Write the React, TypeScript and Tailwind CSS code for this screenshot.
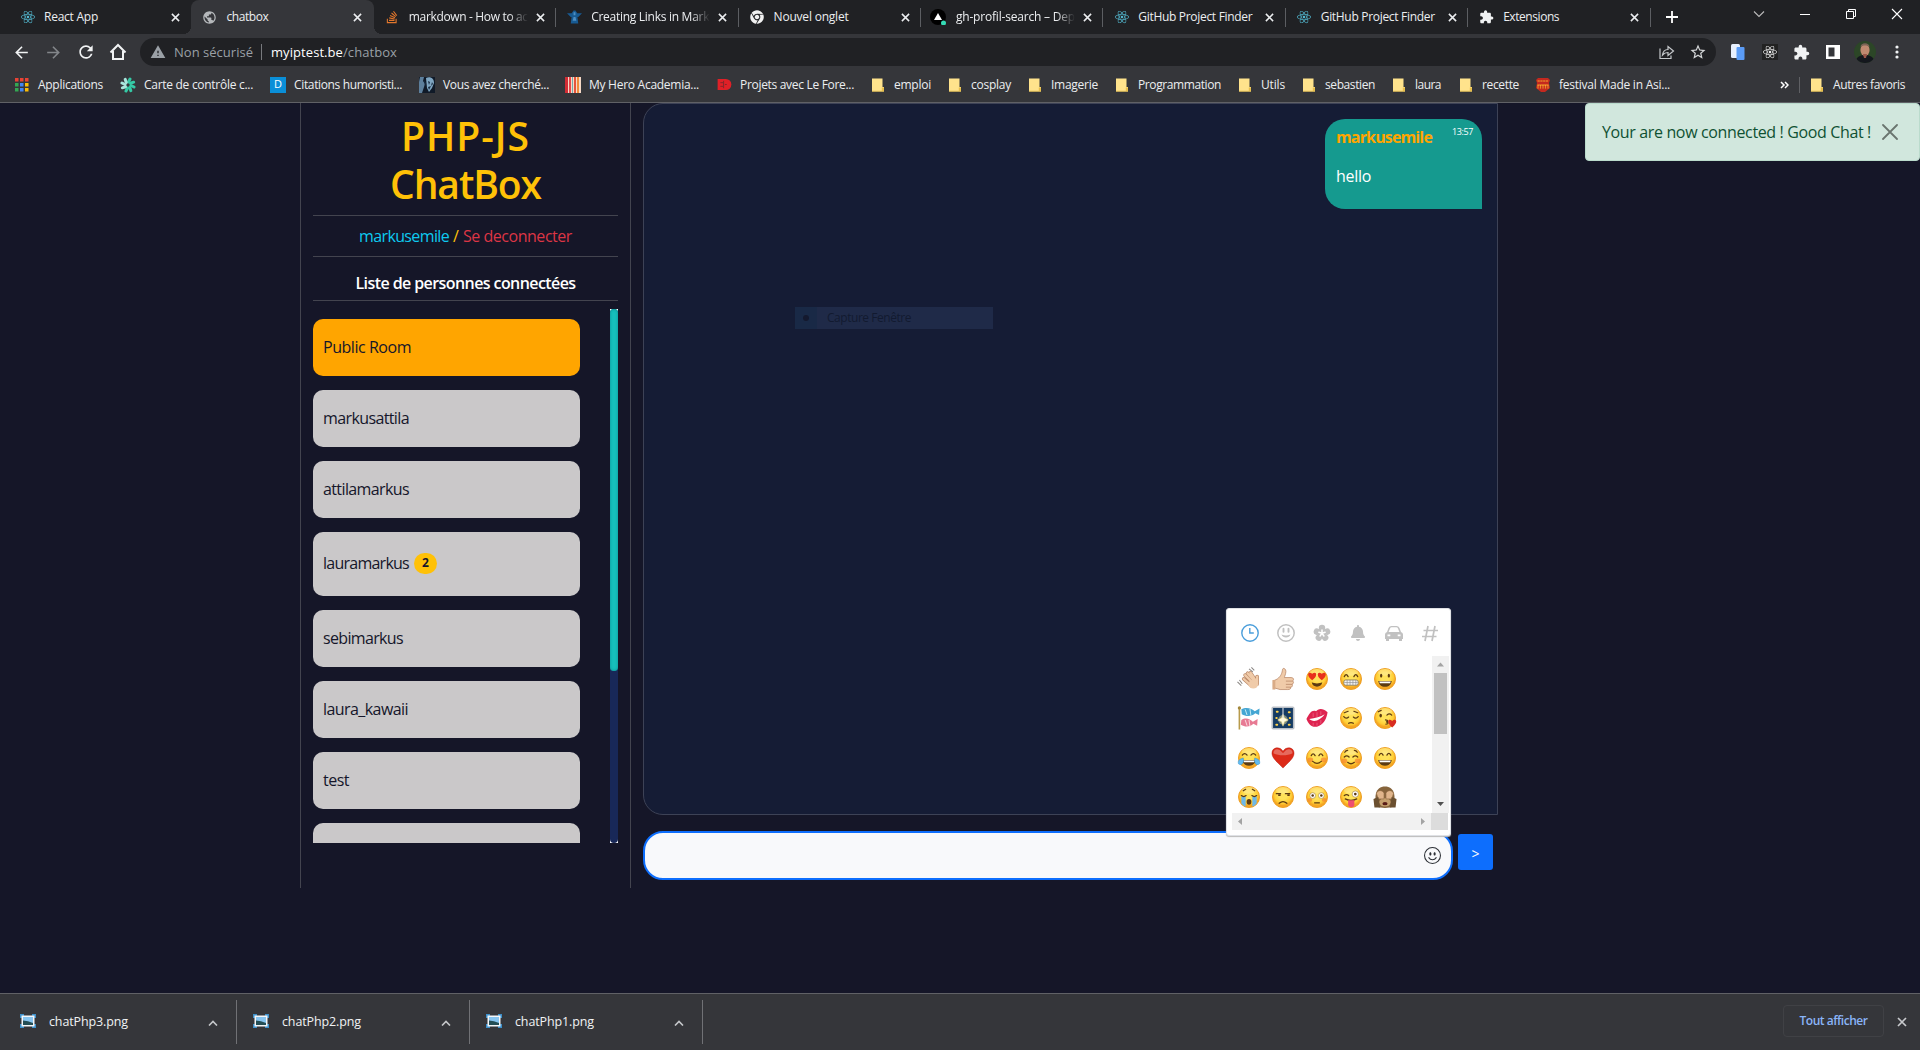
import React, { useLayoutEffect, useRef, useState } from "react";
import { MdArrowBack, MdArrowForward, MdRefresh, MdExtension, MdWarning, MdStarBorder, MdPublic } from "react-icons/md";
import { FaReact, FaBell, FaStackOverflow, FaChrome } from "react-icons/fa";
import { BsEmojiSmile } from "react-icons/bs";

/* Text whose letter spacing is adjusted so that it spans the given width. */
function Fit({ w, children, className = "" }: { w: number; children: string; className?: string }) {
  const ref = useRef<HTMLSpanElement>(null);
  const [ls, setLs] = useState(0);
  useLayoutEffect(() => {
    if (ref.current) setLs((w - ref.current.getBoundingClientRect().width) / children.length);
  }, [w, children]);
  return (
    <span ref={ref} className={"inline-block whitespace-pre shrink-0 " + className} style={{ letterSpacing: ls + "px" }}>
      {children}
    </span>
  );
}

const Close = ({ className = "" }: { className?: string }) => (
  <svg viewBox="0 0 10 10" className={"shrink-0 " + className} fill="none" stroke="currentColor" strokeWidth="1.7">
    <path d="M1 1l8 8M9 1l-8 8" />
  </svg>
);

const Triangle = () => (
  <div className="relative -ml-0.5 flex h-4 w-4 items-center justify-center rounded-full bg-black">
    <svg viewBox="0 0 16 16" className="h-4 w-4">
      <path d="M8 4l4 7H4z" fill="#fff" />
      <circle cx="13.5" cy="14" r="2.5" fill="#35dbb5" />
    </svg>
  </div>
);

const Robot = () => (
  <svg viewBox="0 0 16 16" className="h-4 w-4" fill="#175a92">
    <path d="M0 4h5l2-3h2l2 3h5l-4 4H4z" />
    <path d="M5 7h6l1 8H4z" />
    <path d="M7 3h2v3H7zM7 8h2l1 4H6z" fill="#4d8fc4" />
  </svg>
);

const tabs: { t: string; w: number; icon: React.ReactNode; active?: boolean; fade?: boolean; sep?: boolean }[] = [
  { t: "React App", w: 54, icon: <FaReact className="text-[#53b9d1]" size={14} /> },
  { t: "chatbox", w: 42, icon: <MdPublic className="text-[#b5b8bb]" size={17} />, active: true },
  { t: "markdown - How to ac", w: 119, icon: <FaStackOverflow className="text-[#e0762c]" size={14} />, fade: true, sep: true },
  { t: "Creating Links in Mark", w: 118, icon: <Robot />, fade: true, sep: true },
  { t: "Nouvel onglet", w: 75, icon: <FaChrome className="text-[#f1f1f1]" size={14} />, sep: true },
  { t: "gh-profil-search – Dep", w: 119, icon: <Triangle />, fade: true, sep: true },
  { t: "GitHub Project Finder", w: 114, icon: <FaReact className="text-[#53b9d1]" size={14} />, sep: true },
  { t: "GitHub Project Finder", w: 114, icon: <FaReact className="text-[#53b9d1]" size={14} />, sep: true },
  { t: "Extensions", w: 56, icon: <MdExtension className="text-[#f1f3f4]" size={16} />, sep: true },
];

function TabStrip() {
  return (
    <div className="flex h-[34px] bg-[#202124] pl-[9px] text-[12px] text-[#eceef0]">
      {tabs.map((t, i) => (
        <div key={i} className={"relative flex h-[34px] w-[182.4px] shrink-0 items-center pl-[11px] " + (t.active ? "rounded-t-lg bg-[#35363a]" : "")}>
          {t.active && (
            <>
              <div className="absolute bottom-0 -left-2 h-2 w-2 bg-[radial-gradient(circle_at_0_0,#202124_8px,#35363a_8px)]" />
              <div className="absolute bottom-0 -right-2 h-2 w-2 bg-[radial-gradient(circle_at_100%_0,#202124_8px,#35363a_8px)]" />
            </>
          )}
          <div className="flex w-[15px] shrink-0 justify-center">{t.icon}</div>
          <div className={"ml-[9px] flex w-[119px] leading-5 " + (t.fade ? "[mask-image:linear-gradient(to_right,#000_84%,transparent)]" : "")}>
            <Fit w={t.w}>{t.t}</Fit>
          </div>
          <Close className="ml-[8px] h-[9px] w-[9px]" />
          {t.sep && <div className="absolute top-[8px] right-0 h-[19px] w-px bg-[#5c5e62]" />}
        </div>
      ))}
      <div className="flex w-[43px] items-center justify-center">
        <svg viewBox="0 0 12 12" className="h-3 w-3" stroke="#fff" strokeWidth="1.8"><path d="M6 0v12M0 6h12" /></svg>
      </div>
      <div className="ml-auto flex h-7 items-center text-white">
        <svg viewBox="0 0 46 28" className="h-7 w-[46px]" fill="none" stroke="#bbb" strokeWidth="1.1"><path d="M18 11.5l5 5 5-5" /></svg>
        <svg viewBox="0 0 46 28" className="h-7 w-[46px]" fill="none" stroke="#fff"><path d="M18 14.5h10" /></svg>
        <svg viewBox="0 0 46 28" className="h-7 w-[46px]" fill="none" stroke="#fff"><path d="M18.500 11.500h7v7h-7zM20.500 11v-1.500h7v7h-1.500" /></svg>
        <svg viewBox="0 0 46 28" className="h-7 w-[46px]" fill="none" stroke="#fff" strokeWidth="1.1"><path d="M18 9l10 10M28 9l-10 10" /></svg>
      </div>
    </div>
  );
}

function Toolbar() {
  return (
    <div className="flex h-[36px] items-center bg-[#35363a] pl-[12px]">
      <MdArrowBack size={19} className="text-[#f1f3f4]" />
      <MdArrowForward size={19} className="ml-[13px] text-[#83868a]" />
      <MdRefresh size={20} className="ml-[13px] text-[#f1f3f4]" />
      <svg viewBox="0 0 18 18" className="ml-[13px] h-[18px] w-[18px]" fill="none" stroke="#f1f3f4" strokeWidth="2">
        <path d="M1.500 9.500L9 2l7.500 7.500M4 8v8h10V8" />
      </svg>
      <div className="ml-[13px] flex h-[28px] w-[1576px] items-center rounded-full bg-[#202124] pl-[10px] text-[13px] text-[#9aa0a6]">
        <MdWarning size={16} />
        <Fit w={79} className="mt-px ml-[8px]">Non sécurisé</Fit>
        <div className="mr-[9px] ml-[8px] h-4 w-px bg-[#77797d]" />
        <Fit w={72} className="mt-px text-white">myiptest.be</Fit>
        <Fit w={54} className="mt-px">/chatbox</Fit>
        <svg viewBox="0 0 18 18" className="ml-auto h-[18px] w-[18px]" fill="none" stroke="#c5c8cb" strokeWidth="1.200">
          <path d="M3 5.500v10h11v-3M5.500 12c.5-4 2.500-5.500 5.500-5.500V3.500l5.500 4.500-5.500 4.500v-3c-2.500 0-4 .7-5.500 2.500z" />
        </svg>
        <MdStarBorder size={18} className="mr-[9px] ml-[14px] text-[#d5d7d9]" />
      </div>
      <svg viewBox="0 0 14 18" className="ml-[15px] h-[18px] w-[14px]">
        <rect x="0" y="1" width="9" height="14" rx="1.500" fill="#e8f0fe" />
        <rect x="5.500" y="4" width="8" height="13" rx="1" fill="#5b9cf6" />
      </svg>
      <div className="ml-[17px] flex h-4 w-4 items-center justify-center bg-[#222]"><FaReact size={14} className="text-[#eee]" /></div>
      <MdExtension size={17} className="ml-[15px] text-[#f1f3f4]" />
      <svg viewBox="0 0 14 14" className="ml-[16px] h-[14px] w-[14px]"><path d="M0 0h14v14H0zM2.500 2.500v9h6v-9z" fillRule="evenodd" fill="#fff" /></svg>
      <svg viewBox="0 0 22 22" className="ml-[14px] h-[22px] w-[22px]">
        <clipPath id="avatar"><circle cx="11" cy="11" r="11" /></clipPath>
        <g clipPath="url(#avatar)">
          <rect width="22" height="22" fill="#2c4627" />
          <path d="M1 22c1-6 5-8 10-8s9 2 10 8z" fill="#14171d" />
          <ellipse cx="11" cy="9" rx="4.600" ry="6" fill="#c08a70" />
          <path d="M6.500 6c0-5 9-5 9 0-2-2-7-2-9 0z" fill="#7c6556" />
          <path d="M9 13h4l-1 4h-2z" fill="#9a5648" />
        </g>
      </svg>
      <svg viewBox="0 0 4 16" className="ml-[19px] h-4 w-1" fill="#f1f3f4"><circle cx="2" cy="3" r="1.600" /><circle cx="2" cy="8" r="1.600" /><circle cx="2" cy="13" r="1.600" /></svg>
    </div>
  );
}

const Folder = () => (
  <svg viewBox="0 0 12 14" className="h-[14px] w-[12px] shrink-0">
    <path d="M0 .5h10.500V9H12v4.500H0z" fill="#ffe38c" />
    <path d="M0 12.800h9.800V9.500H12v4H0z" fill="#e8bf4b" />
  </svg>
);

const AppsIcon = () => (
  <svg viewBox="0 0 14 14" className="h-[14px] w-[14px]">
    {["#e94335", "#e94335", "#e94335", "#34a853", "#4285f4", "#fbbc05", "#34a853", "#4285f4", "#fbbc05"].map((c, i) => (
      <rect key={i} x={(i % 3) * 5} y={Math.floor(i / 3) * 5} width="3.500" height="3.500" fill={c} />
    ))}
  </svg>
);

const Burst = () => (
  <svg viewBox="0 0 16 16" className="h-4 w-4" strokeWidth="3" strokeLinecap="round">
    {[0, 45, 90, 135, 180, 225, 270, 315].map((a, i) => (
      <path key={a} d="M8.500 5L10 2" stroke={i < 5 ? "#35c9a5" : "#a9e6dc"} transform={`rotate(${a} 8 8)`} />
    ))}
  </svg>
);

const Anime = () => (
  <svg viewBox="0 0 16 16" className="h-4 w-4">
    <rect width="16" height="16" fill="#101a28" />
    <path d="M1 0h4L4 4l2 3-3 9H0V5z" fill="#5d7f9c" />
    <path d="M7 1c4-2 8 0 8 5l-2 5-3 4-2-4z" fill="#7fa6c2" />
    <path d="M5 3l2 3-1 4zM9 4l2 1-1 3zM13 5l1 2-2 2zM9 10l3-1-2 4z" fill="#182c42" />
  </svg>
);

const Stripes = () => (
  <svg viewBox="0 0 16 16" className="h-4 w-4">
    <rect width="16" height="16" fill="#f6d9c6" />
    <path d="M0 0h3v16H0z" fill="#d22d35" /><path d="M4 0h2v16H4z" fill="#e7474b" /><path d="M7 0h1v16H7z" fill="#7aa" />
    <path d="M9 0h2v16H9z" fill="#e5533d" /><path d="M12 0h2v16h-2z" fill="#f08b3b" />
  </svg>
);

const RedD = () => (
  <svg viewBox="0 0 15 12" className="h-[11px] w-[15px]">
    <path d="M0 0h9a6 6 0 010 12H0z" fill="#e02027" />
    <path d="M3 4h3M3 8h3M6.500 2v8M8 6h2" stroke="#7c262c" strokeWidth="1" />
  </svg>
);

const Festival = () => (
  <svg viewBox="0 0 14 14" className="h-[14px] w-[14px]">
    <path d="M2 0h10l2 2-1 3 1 5-5 4H5L0 10l1-5-1-3z" fill="#c4291f" />
    <path d="M1.500 3h11M2 6.500v4M4.500 6.500v4M7 6.500v4M9.500 6.500v4M12 6.500v4M1.500 7h11" stroke="#f7a52c" strokeWidth="1.200" strokeDasharray="2.300 .5" />
  </svg>
);

const bookmarks: [string, number, number, number, React.ReactNode][] = [
  ["Applications", 15, 23, 65, <AppsIcon />],
  ["Carte de contrôle c...", 120, 24, 109, <Burst />],
  ["Citations humoristi...", 270, 24, 108, <div className="flex h-4 w-4 items-center justify-center bg-[#0a8fd8] text-[11px] text-white">D</div>],
  ["Vous avez cherché...", 419, 24, 106, <Anime />],
  ["My Hero Academia...", 565, 24, 110, <Stripes />],
  ["Projets avec Le Fore...", 717, 23, 114, <RedD />],
  ["emploi", 872, 22, 37, <Folder />],
  ["cosplay", 949, 22, 40, <Folder />],
  ["Imagerie", 1029, 22, 47, <Folder />],
  ["Programmation", 1116, 22, 83, <Folder />],
  ["Utils", 1239, 22, 24, <Folder />],
  ["sebastien", 1303, 22, 50, <Folder />],
  ["laura", 1393, 22, 26, <Folder />],
  ["recette", 1460, 22, 37, <Folder />],
  ["festival Made in Asi...", 1536, 23, 111, <Festival />],
];

function Bookmarks() {
  return (
    <div className="flex h-[33px] items-center border-b border-[#606166] bg-[#35363a] pb-[3px] pl-[15px] text-[12px] text-[#eceef0]">
      {bookmarks.map(([t, x, iw, w, icon], i) => (
        <div key={t} className="flex shrink-0 items-center" style={{ width: (bookmarks[i + 1]?.[1] ?? 1780) - x }}>
          <div className="flex shrink-0" style={{ width: iw }}>{icon}</div>
          <Fit w={w}>{t}</Fit>
        </div>
      ))}
      <svg viewBox="0 0 9 8" className="h-2 w-[9px]" fill="none" stroke="#fff" strokeWidth="1.500"><path d="M1 1l3 3-3 3M5 1l3 3-3 3" /></svg>
      <div className="mr-[11px] ml-[10px] h-4 w-px bg-[#5f6064]" />
      <Folder />
      <Fit w={72} className="ml-[10px]">Autres favoris</Fit>
    </div>
  );
}

const people: { n: string; w: number; badge?: string }[] = [
  { n: "Public Room", w: 88 },
  { n: "markusattila", w: 86 },
  { n: "attilamarkus", w: 86 },
  { n: "lauramarkus", w: 86, badge: "2" },
  { n: "sebimarkus", w: 80 },
  { n: "laura_kawaii", w: 85 },
  { n: "test", w: 26 },
  { n: "", w: 0 },
];

function Sidebar() {
  return (
    <aside className="flex h-[785px] w-[331px] flex-col border-x border-[#43444f] px-3">
      <h1 className="mt-[9px] flex flex-col items-center text-[39px] leading-[48px] font-semibold text-[#ffc107]">
        <Fit w={129}>PHP-JS</Fit>
        <Fit w={151}>ChatBox</Fit>
      </h1>
      <div className="mt-[7px] flex h-[42px] items-center justify-center border-y border-[#43444f] pb-px">
        <Fit w={90} className="text-[#0dcaf0]">markusemile</Fit>
        <span className="mx-[4px] text-[#ffc107]">/</span>
        <Fit w={109} className="text-[#dc3545]">Se deconnecter</Fit>
      </div>
      <div className="flex h-[44px] items-center justify-center border-b border-[#43444f] pt-[9px] font-semibold text-white">
        <Fit w={220}>Liste de personnes connectées</Fit>
      </div>
      <div className="mt-2 flex h-[534px] justify-between overflow-hidden">
        <ul className="flex w-[267px] flex-col gap-[14px] pt-[10px]">
          {people.map((p, i) => (
            <li key={i} className={"flex shrink-0 items-center rounded-[10px] pl-[10px] text-[#15162a] " + (i === 0 ? "bg-[#ffa500] " : "bg-[#cac8c9] ") + (p.badge ? "h-[64px] pb-[2px]" : "h-[57px] pb-[2px]")}>
              {p.n && <Fit w={p.w}>{p.n}</Fit>}
              {p.badge && <span className="ml-[5px] flex h-[21px] w-[23px] items-center justify-center rounded-full bg-[#ffc107] text-[12px] font-bold">{p.badge}</span>}
            </li>
          ))}
        </ul>
        <div className="h-full w-2 bg-white">
          <div className="h-full rounded bg-[#182858]">
            <div className="h-[362px] rounded bg-[#16bfbb] shadow-[inset_0_0_3px_#0b8d90]" />
          </div>
        </div>
      </div>
    </aside>
  );
}

/* ---- emoji drawings on a 24 x 24 grid ---- */
const B = "#5c3a12";
function Face({ children }: { children: React.ReactNode }) {
  return (
    <>
      <circle cx="12" cy="12" r="11" fill="url(#face)" stroke="#eb9a1d" strokeWidth=".9" />
      <ellipse cx="12" cy="5" rx="7.500" ry="3.500" fill="#fff" opacity=".22" />
      {children}
    </>
  );
}
const heart = "M0 3C-5-1-2.500-4 0-1.700 2.500-4 5-1 0 3z";
const Line = ({ d, w = 1.3 }: { d: string; w?: number }) => <path d={d} fill="none" stroke={B} strokeWidth={w} strokeLinecap="round" />;
const Teeth = () => <path d="M5 14h14c-.5 4-3 6-7 6s-6.500-2-7-6z" fill={B} />;
const emojis: React.ReactNode[] = [
  <>
    <path d="M8 8l9 9M10.500 6l8 9M6.500 12l8 7M13.500 5.500l6 9M20.500 9.500v8" stroke="#b98767" strokeWidth="3.800" strokeLinecap="round" />
    <path d="M8 8l9 9M10.500 6l8 9M6.500 12l8 7M13.500 5.500l6 9M20.500 9.500v8" stroke="#f0cba9" strokeWidth="2.400" strokeLinecap="round" />
    <ellipse cx="16.500" cy="17.500" rx="5" ry="4.500" fill="#f0cba9" />
    <path d="M12 1.500l4 3M14.500 0l3 3M2 13l3 4M0 15l4 4" stroke="#8b8784" strokeWidth="1.100" />
  </>,
  <>
    <path d="M2 14l4-2c4-3 5-6 5.500-10 .4-2 3.500-1 3.500 2 0 3-1.500 5-1.500 6.500h7c3 0 3 3 1.500 3.500 1.500 1 1 3-.5 3.500.8 1.500 0 3-1.500 3 .3 1.500-.5 2.500-3 2.500H9l-7-2z" fill="#f0cba9" stroke="#b98767" strokeWidth=".8" />
    <path d="M15 14.200h7M15 17.600h6.500M15 20.500h5" stroke="#b98767" strokeWidth=".8" />
    <path d="M1 13h3v10H1z" fill="#d9ab86" />
  </>,
  <Face><path d={heart} transform="translate(7 9) scale(1.450)" fill="#e8301c" /><path d={heart} transform="translate(17 9) scale(1.450)" fill="#e8301c" /><path d="M6.500 15.500c3 1.500 8 1.500 11 0-.5 3-2.500 4.500-5.500 4.500s-5-1.500-5.500-4.500z" fill={B} /></Face>,
  <Face><Line d="M5 9.500q2-4 4 0M15 9.500q2-4 4 0" /><rect x="4.500" y="13" width="15" height="5.500" rx="2" fill="#f4f4f4" stroke="#8c7c5c" strokeWidth=".9" /><path d="M5 15.700h14M8 13v5.500M11 13v5.500M14 13v5.500M17 13v5.500" stroke="#8d8d8d" strokeWidth=".7" /></Face>,
  <Face><ellipse cx="8" cy="8.500" rx="1.200" ry="2" fill={B} /><ellipse cx="16" cy="8.500" rx="1.200" ry="2" fill={B} /><Teeth /><path d="M6 14.500h12l-.6 2H6.600z" fill="#fff" /></Face>,
  <>
    <path d="M2 1v23" stroke="#b89b4c" strokeWidth="1.700" /><circle cx="2" cy="1.500" r="1.700" fill="#a3883c" />
    <path d="M4 3c5-3 11-1 14 2l5-3-.5 7-4-2c-3 3-9 4-14 1z" fill="#45a6d3" /><path d="M8 3l2 6M13 2.500l1 7" stroke="#c9edf7" />
    <path d="M4 14c5-3 9-1 12 2l5-3-.5 7-4-2c-3 3-8 4-13 1z" fill="#e77a93" /><path d="M8 14l2 6M12 14l1 7" stroke="#fbdce2" />
  </>,
  <>
    <rect x=".8" y=".8" width="22.400" height="22.400" rx="1" fill="#153b63" stroke="#b9bec5" strokeWidth="1.700" />
    <circle cx="12" cy="14" r="5" fill="#f5e9a0" opacity=".45" />
    <path d="M12 8l1.500 4 4 2-4 2-1.500 4.500L10.500 16l-4-2 4-2z" fill="#fffbe0" stroke="#ffe27a" strokeWidth=".5" />
    <path d="M5.500 5.500h1M18 6h1M5 19h1M18 19h1M5 12h.5M19 12h.5" stroke="#ffd24a" strokeWidth="2" strokeLinecap="round" /><path d="M12 1v11" stroke="#cfd3d8" strokeWidth="1.200" />
  </>,
  <>
    <path d="M1 13c3-6 6-10 10-8 2-3 7-4 12 1-1 7-4 13-11 15-6 1-9-3-11-8z" fill="#de2450" />
    <path d="M4 13c6-1 12-2 16-5-3 4-7 7-11 7-2 0-4-1-5-2z" fill="#fff" /><path d="M8 7v4M12 6v5M16 5v4M8 17v3M12 17v3M16 14v4" stroke="#f0708c" strokeWidth=".7" />
  </>,
  <Face><Line d="M5 6.500l4-1.500M19 6.500L15 5M4.500 10.500q2.500 3 5 .5M14.500 11q2.500 2.500 5-.5M9.500 17.500q2.500-1.500 5 0" /></Face>,
  <Face><Line d="M5 5.500l3-1.500M14 9q2.500-2.500 5 0M12.500 14c3 0 3 2 .5 2 3 0 3 2.500 0 2.500" /><ellipse cx="7.500" cy="9.500" rx="1.300" ry="2" fill={B} /><path d={heart} transform="translate(19.500 17.500) scale(1.450)" fill="#d82c20" /></Face>,
  <Face><Line d="M5 9q2.500-3 5 0M14 9q2.500-3 5 0" /><Teeth /><path d="M6 14.500h12l-.6 2H6.600z" fill="#fff" /><path d="M1 18c-1-4 2-5 5-6 1 4-1 9-5 6zM23 18c1-4-2-5-5-6-1 4 1 9 5 6z" fill="#62baf0" stroke="#2d8fcc" strokeWidth=".5" /></Face>,
  <><path d="M12 22.500C7 17 .5 12.500.5 7 .5.500 9-.5 12 5c3-5.500 11.500-4.500 11.500 2 0 5.500-6.500 10-11.500 15.500z" fill="#dc2a18" stroke="#b72318" strokeWidth=".5" /><path d="M2 7c0-5 6-5.500 9-1 1 1 1 1 2 0 3-4.500 9-4 9 1-6 3-14 3-20 0z" fill="#fff" opacity=".3" /></>,
  <Face><ellipse cx="5" cy="14" rx="3" ry="2.500" fill="#f58632" opacity=".7" /><ellipse cx="19" cy="14" rx="3" ry="2.500" fill="#f58632" opacity=".7" /><Line d="M6 9.500q2-3.500 4 0M14 9.500q2-3.500 4 0M7.500 15.500q4.500 4 9 0" /></Face>,
  <Face><ellipse cx="5" cy="15" rx="3" ry="2.500" fill="#f58632" opacity=".7" /><ellipse cx="19" cy="15" rx="3" ry="2.500" fill="#f58632" opacity=".7" /><Line d="M5.500 6q1-2 3-2M18.500 6q-1-2-3-2M5 11q2.500-2.500 5 0M14 11q2.500-2.500 5 0M8.500 16.500q3.500 3 7 0" /></Face>,
  <Face><Line d="M6 9q2-3.500 4 0M14 9q2-3.500 4 0" /><Teeth /><path d="M6 14.500h12l-.6 2H6.600z" fill="#fff" /></Face>,
  <Face><path d="M4 11.500h4.500V22c-2-.5-3.500-2-4.500-3.500zM15.500 11.500H20v7c-1 1.500-2.500 3-4.500 3.500z" fill="#6db8e8" /><Line d="M4 10.500q2.500 2 5 0M15 10.500q2.500 2 5 0M6 5.500l2.500-1.500M18 5.500L15.500 4" /><ellipse cx="12" cy="17" rx="2.500" ry="3" fill={B} /></Face>,
  <Face><Line d="M5 8.500h4.500M14.500 8.500H19M8 18.500q4-3.500 8 0" /><path d="M7 10h2.500M16.500 10H19" stroke={B} strokeWidth="1.800" /></Face>,
  <Face><ellipse cx="4.500" cy="15" rx="2.500" ry="2" fill="#f58632" opacity=".7" /><ellipse cx="19.500" cy="15" rx="2.500" ry="2" fill="#f58632" opacity=".7" /><circle cx="7.500" cy="10.500" r="3" fill="#fff" stroke="#9b7837" strokeWidth=".6" /><circle cx="16.500" cy="10.500" r="3" fill="#fff" stroke="#9b7837" strokeWidth=".6" /><circle cx="7.500" cy="10.500" r="1.300" fill={B} /><circle cx="16.500" cy="10.500" r="1.300" fill={B} /><Line d="M9.500 18h5" /></Face>,
  <Face><circle cx="16.500" cy="9" r="3.300" fill="#fff" stroke="#9b7837" strokeWidth=".6" /><circle cx="16.500" cy="9" r="1.400" fill={B} /><Line d="M5 10.500q2.500-2 4.500 0M6 14q6 3 12 0" /><path d="M9 15.500h6.500V20c0 3.500-6 3.500-6.500 0z" fill="#ee4f70" /></Face>,
  <>
    <path d="M4 22C0 12 2 1 12 1s12 11 8 21c-3 2-13 2-16 0z" fill="#86643c" /><ellipse cx="12" cy="17.500" rx="6" ry="4.500" fill="#c6a06e" />
    <path d="M3 8c2-4 7-3 8 0v6H5zM21 8c-2-4-7-3-8 0v6h6z" fill="#e0b58b" stroke="#916b45" strokeWidth=".7" /><path d="M0 14l5-2 2 11H1zM24 14l-5-2-2 11h6z" fill="#6b5030" /><ellipse cx="12" cy="19" rx="2.700" ry="1.700" fill="#5a1c17" />
  </>,
];

function EmojiPicker() {
  return (
    <div className="absolute top-[505px] left-[583px] h-[228px] w-[225px] rounded-[3px] border border-[#dfe1e5] bg-white pr-[2px] pl-[5px] shadow-[0_1px_1px_#bbb]">
      <svg className="absolute h-0 w-0"><defs><radialGradient id="face" cy=".4"><stop offset=".4" stopColor="#ffe25a" /><stop offset=".8" stopColor="#ffce35" /><stop offset="1" stopColor="#f5a623" /></radialGradient></defs></svg>
      <div className="flex h-[47px] items-center gap-[18px] pl-[9px] text-[#c1c1c1]">
        <svg viewBox="0 0 18 18" className="h-[18px] w-[18px]" fill="none" stroke="#4a9edb" strokeWidth="1.400"><circle cx="9" cy="9" r="8.200" /><path d="M8.800 4v5h4" /></svg>
        <svg viewBox="0 0 18 18" className="h-[18px] w-[18px]" fill="none" stroke="currentColor" strokeWidth="1.500"><circle cx="9" cy="9" r="8.200" /><path d="M4.500 10.500c1 4 8 4 9 0-3 1.200-6 1.200-9 0z" fill="currentColor" stroke="none" /><path d="M6.500 4.800v3M11.500 4.800v3" strokeWidth="1.900" strokeLinecap="round" /></svg>
        <svg viewBox="0 0 18 18" className="h-[18px] w-[18px]" fill="currentColor">
          {[0, 72, 144, 216, 288].map((a) => <circle key={a} cx="9" cy="3.900" r="3.200" transform={`rotate(${a} 9 9.300)`} />)}
          <circle cx="9" cy="9.300" r="4.500" />
          {[0, 72, 144, 216, 288].map((a) => <path key={a} d="M9 9.300V6" stroke="#fff" strokeWidth="1.500" strokeLinecap="round" transform={`rotate(${a} 9 9.300)`} />)}
        </svg>
        <div className="flex w-[18px] justify-center"><FaBell size={16} /></div>
        <svg viewBox="0 0 18 18" className="h-[18px] w-[18px]" fill="currentColor">
          <path fillRule="evenodd" d="M3.500 4Q4.500 2 6.500 2h5q2 0 3 2L16 8q2 .8 2 2.500V15h-1v2h-3v-2H4v2H1v-2H0v-4.500Q0 8.800 2 8zM5 4.500L3.600 8h10.800L13 4.500q-.5-1.200-1.500-1.200h-5q-1 0-1.500 1.200zM2.500 10.500v1.800h2.800v-1.800zM12.700 10.500v1.800h2.800v-1.800z" />
        </svg>
        <svg viewBox="0 0 18 18" className="h-[18px] w-[18px]" fill="none" stroke="currentColor" strokeWidth="1.700"><path d="M7 2L4 17M14 2l-3 15M2.500 6.500H17M1 12.500h14.500" /></svg>
      </div>
      <div className="flex h-[157px]">
        <div className="flex w-[200px] shrink-0 flex-wrap content-start gap-x-[10px] gap-y-[15.300px] pt-[11px] pl-[5px]">
          {emojis.map((e, i) => (
            <svg key={i} viewBox="-.5 -.5 25 25" className={"h-6 w-6 shrink-0 " + (i % 5 === 4 ? "mr-[15px]" : "")}>{e}</svg>
          ))}
        </div>
        <div className="ml-auto flex w-[17px] flex-col items-center bg-[#f1f1f1]">
          <svg viewBox="0 0 17 17" className="h-[17px] w-[17px]"><path d="M8.500 6.500l3.500 4H5z" fill="#a3a3a3" /></svg>
          <div className="h-[61px] w-[13px] bg-[#c1c1c1]" />
          <svg viewBox="0 0 17 17" className="mt-auto h-[17px] w-[17px]"><path d="M5 6h7l-3.500 4z" fill="#505050" /></svg>
        </div>
      </div>
      <div className="flex h-[17px]">
        <div className="flex flex-1 justify-between bg-[#f1f1f1]">
          <svg viewBox="0 0 17 17" className="h-[17px] w-[17px]"><path d="M10 5v7L6 8.500z" fill="#a3a3a3" /></svg>
          <svg viewBox="0 0 17 17" className="h-[17px] w-[17px]"><path d="M7 5v7l4-3.500z" fill="#a3a3a3" /></svg>
        </div>
        <div className="w-[17px] bg-[#dcdcdc]" />
      </div>
    </div>
  );
}

function Chat() {
  return (
    <section className="relative ml-3 flex w-[855px] flex-col">
      <div className="relative h-[712px] rounded-l-[20px] border border-[#3d4256] bg-[#151c35]">
        <div className="mt-[15px] mr-[15px] ml-auto h-[90px] w-[157px] rounded-[20px] rounded-br-none bg-[#159a8f] pr-[9px] pl-[11px]">
          <div className="flex h-[36px] items-center justify-between">
            <Fit w={96} className="-mt-px font-bold text-[#ffa500]">markusemile</Fit>
            <Fit w={21} className="-mt-[11px] text-[9px] text-white">13:57</Fit>
          </div>
          <Fit w={35} className="mt-[9px] leading-6 text-white">hello</Fit>
        </div>
        <div className="absolute top-[203px] left-[151px] flex h-[22px] w-[198px] items-center bg-[#1f2a48] text-[12px] text-[#121a30]">
          <div className="flex h-full w-[22px] items-center justify-center bg-[#192946]"><div className="h-[6px] w-[6px] rounded-full bg-[#14192e]" /></div>
          <Fit w={84} className="ml-[10px]">Capture Fenêtre</Fit>
        </div>
      </div>
      <div className="mt-4 flex">
        <div className="flex h-[49px] w-[810px] items-center justify-end rounded-[20px] border-2 border-[#0d6efd] bg-[#f8f9fb] pr-[10px]">
          <BsEmojiSmile size={17} className="text-[#2c3036]" />
        </div>
        <button className="mt-[3px] ml-[5px] flex h-9 w-[35px] items-center justify-center rounded-[3px] bg-[#0d6efd] pt-[2px] text-[14px] text-white">&gt;</button>
      </div>
      <EmojiPicker />
    </section>
  );
}

function Downloads() {
  return (
    <footer className="flex h-[57px] border-t border-[#606166] bg-[#35363a] text-[12.500px] text-[#f1f3f4]">
      {["chatPhp3.png", "chatPhp2.png", "chatPhp1.png"].map((f) => (
        <div key={f} className="mt-[6px] flex h-[44px] w-[233px] items-center border-r border-[#707175] pt-px pl-[16px] first:w-[237px] first:pl-[20px]">
          <svg viewBox="0 0 16 14" className="-mt-[3px] h-[14px] w-4">
            <path d="M0 0h4v4H0zM12 0h4v4h-4zM0 10h4v4H0zM12 10h4v4h-4z" fill="#3d8fc9" /><path d="M1.500 1.500h13v11h-13z" fill="#f4f6f8" />
            <path d="M3 3h10v8H3z" fill="#87c5f0" /><path d="M3 6.500q5 0 10 2.500v2H3z" fill="#244e55" />
          </svg>
          <Fit w={79} className="ml-[13px]">{f}</Fit>
          <svg viewBox="0 0 10 6" className="mr-[18px] ml-auto h-[6px] w-[10px]" fill="none" stroke="#c5c7ca" strokeWidth="1.600"><path d="M1 5.500l4-4 4 4" /></svg>
        </div>
      ))}
      <div className="mt-[11px] ml-auto flex h-8 w-[101px] items-center justify-center rounded border border-[#404145] pb-px text-[12px] font-semibold text-[#8ab4f8]">
        <Fit w={68}>Tout afficher</Fit>
      </div>
      <Close className="mt-[23px] mr-[13px] ml-[13px] h-[10px] w-[10px] text-[#c8cacd]" />
    </footer>
  );
}

export default function App() {
  return (
    <div className="flex h-[1050px] w-[1920px] flex-col overflow-hidden bg-[#151628] font-['Open_Sans','Noto_Sans',sans-serif] text-[16px]">
      <TabStrip />
      <Toolbar />
      <Bookmarks />
      <main className="flex flex-1 items-start pl-[300px]">
        <Sidebar />
        <Chat />
        <div className="ml-auto flex h-[58px] w-[335px] items-center rounded-[4px] border border-[#badbcc] bg-[#d1e7dd] pl-[16px] text-[#0f5132]">
          <Fit w={269}>Your are now connected ! Good Chat !</Fit>
          <svg viewBox="0 0 16 16" className="ml-[11px] h-4 w-4 text-[#6a756f]" stroke="currentColor" strokeWidth="1.800" strokeLinecap="round"><path d="M1 1l14 14M15 1L1 15" /></svg>
        </div>
      </main>
      <Downloads />
    </div>
  );
}
